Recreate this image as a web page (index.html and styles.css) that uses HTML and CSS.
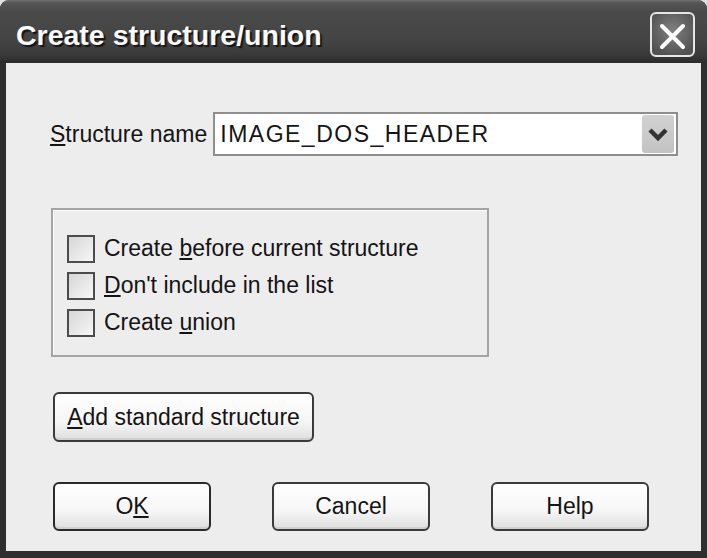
FILE: index.html
```html
<!DOCTYPE html>
<html>
<head>
<meta charset="utf-8">
<link rel="stylesheet" href="styles.css">
</head>
<body>
<div class="window">
  <div class="titlebar">
    <span class="title">Create structure/union</span>
    <span class="close">
      <svg width="41" height="41" viewBox="0 0 41 41"><path d="M10 12 L31 33 M31 12 L10 33" stroke="#fff" stroke-width="4" stroke-linecap="round" fill="none"/></svg>
    </span>
  </div>
  <div class="client">
    <div class="name-row">
      <span class="label"><u>S</u>tructure name</span>
      <div class="combo">
        <span class="combo-text">IMAGE_DOS_HEADER</span>
        <span class="drop">
          <svg width="32" height="38" viewBox="0 0 32 38"><path d="M8 15 L16 23 L24 15" stroke="#333" stroke-width="4.5" fill="none"/></svg>
        </span>
      </div>
    </div>
    <div class="group">
      <div class="check-row"><span class="box"></span><span class="check-label">Create <u>b</u>efore current structure</span></div>
      <div class="check-row"><span class="box"></span><span class="check-label"><u>D</u>on't include in the list</span></div>
      <div class="check-row"><span class="box"></span><span class="check-label">Create <u>u</u>nion</span></div>
    </div>
    <button class="btn std"><u>A</u>dd standard structure</button>
    <div class="actions">
      <button class="btn action default">O<u>K</u></button>
      <button class="btn action">Cancel</button>
      <button class="btn action">Help</button>
    </div>
  </div>
</div>
</body>
</html>
```
FILE: styles.css
```css
html, body {
  margin: 0;
  padding: 0;
}
body {
  background: #e2e2e2;
  width: 707px;
  height: 558px;
  overflow: hidden;
  font-family: "Liberation Sans", Arial, sans-serif;
}
.window {
  width: 707px;
  height: 558px;
  box-sizing: border-box;
  display: flex;
  flex-direction: column;
  background: #2f2f2f;
  border-radius: 9px 9px 0 0;
  overflow: hidden;
}
.titlebar {
  height: 63px;
  flex: none;
  display: flex;
  align-items: flex-start;
  justify-content: space-between;
  background: linear-gradient(#727272 0px, #555 3px, #4a4a4a 12px, #444 40px, #3a3a3a 54px, #2c2c2c 63px);
}
.title {
  margin: 19px 0 0 16px;
  font-size: 28.5px;
  font-weight: bold;
  line-height: 32px;
  color: #fafafa;
  text-shadow: 2px 2px 1px #151515;
}
.close {
  margin: 12px 12px 0 0;
  width: 45px;
  height: 45px;
  box-sizing: border-box;
  border: 2px solid #e6e6e6;
  border-radius: 6px;
  background: radial-gradient(circle at 50% 40%, #808080, #525252 80%);
  display: flex;
  align-items: center;
  justify-content: center;
}
.client {
  flex: 1;
  margin: 0 6px 7px 6px;
  background: #ededed;
  display: flex;
  flex-direction: column;
  align-items: flex-start;
  font-size: 23px;
  color: #141414;
}
.name-row {
  margin-top: 49px;
  align-self: stretch;
  padding: 0 23px 0 44px;
  display: flex;
  align-items: center;
  gap: 6px;
}
.label {
  white-space: nowrap;
}
.combo {
  flex: 1;
  height: 44px;
  box-sizing: border-box;
  border: 2px solid #8e8e8e;
  background: #fff;
  display: flex;
  align-items: center;
  justify-content: space-between;
  padding: 0 2px 0 5px;
}
.combo-text {
  letter-spacing: 1.5px;
}
.drop {
  width: 32px;
  height: 38px;
  border-radius: 3px;
  background: linear-gradient(#d2d2d2, #c2c2c2);
  display: flex;
}
.group {
  margin: 52px 0 0 45px;
  width: 438px;
  height: 149px;
  box-sizing: border-box;
  border: 2px solid #a4a4a4;
  box-shadow: inset 1px 1px 0 #fbfbfb;
  padding: 20px 0 0 14px;
  display: flex;
  flex-direction: column;
}
.check-row {
  height: 37px;
  display: flex;
  align-items: center;
  gap: 9px;
}
.box {
  width: 28px;
  height: 28px;
  box-sizing: border-box;
  border: 2px solid #4c4c4c;
  background: linear-gradient(135deg, #d6d6d6, #f7f7f7);
}
.btn {
  font-family: "Liberation Sans", Arial, sans-serif;
  font-size: 23px;
  color: #141414;
  box-sizing: border-box;
  border: 2px solid #3a3a3a;
  border-radius: 6px;
  background: linear-gradient(#ffffff 0%, #f6f6f6 60%, #dedede 100%);
  box-shadow: inset 0 -2px 0 #cfcfcf;
  padding: 0;
  margin: 0;
}
.std {
  margin: 35px 0 0 47px;
  width: 261px;
  height: 50px;
}
.actions {
  margin: 40px 0 0 47px;
  display: flex;
  gap: 61px;
}
.action {
  width: 158px;
  height: 49px;
}
.default {
  border-color: #2a2a2a;
}
```
